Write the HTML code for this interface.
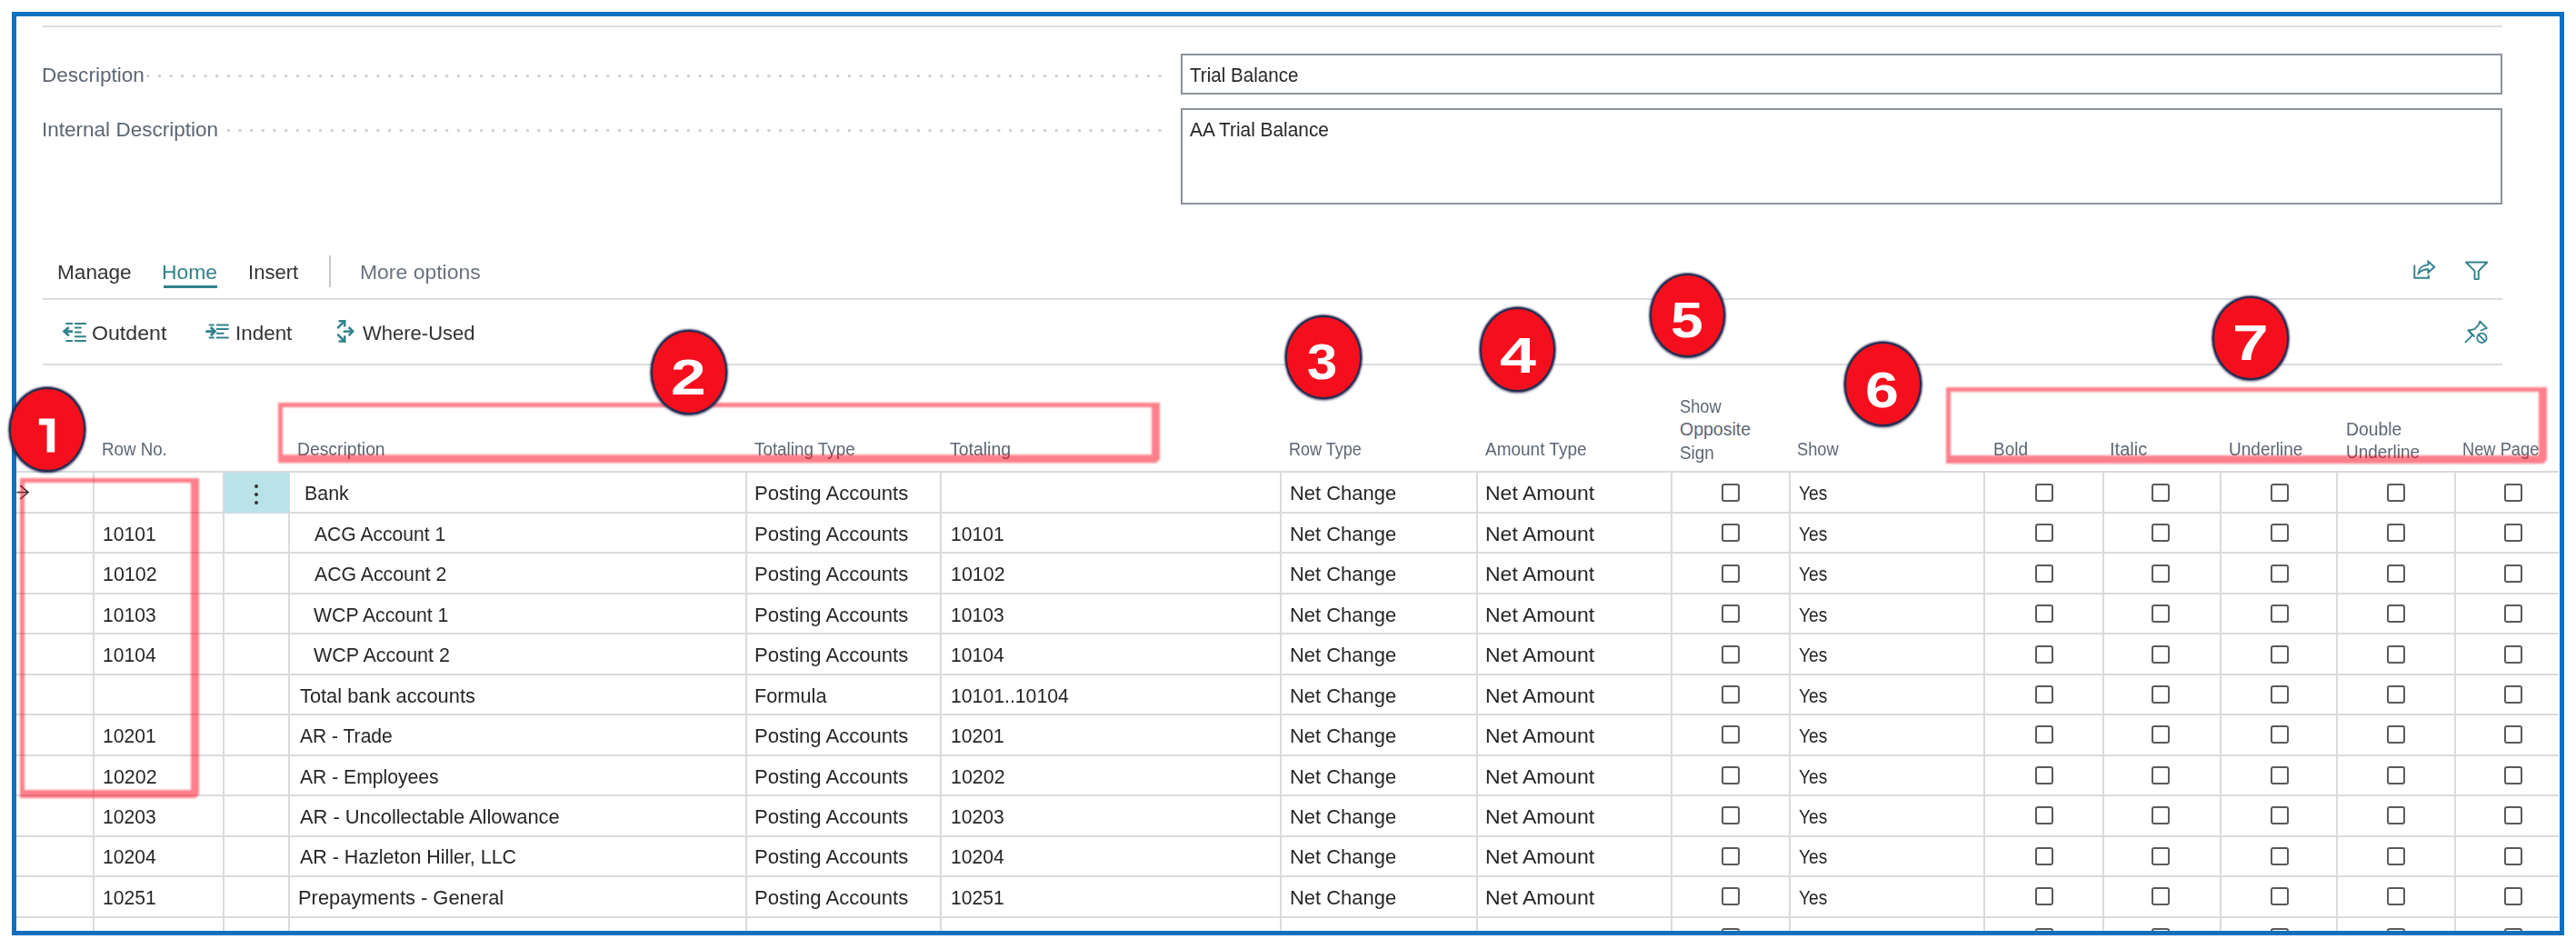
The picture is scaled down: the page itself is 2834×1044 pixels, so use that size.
<!DOCTYPE html>
<html><head><meta charset="utf-8"><style>
html,body{margin:0;padding:0;background:#fff;width:2834px;height:1044px;overflow:hidden;position:relative}
.t{position:absolute;font-family:"Liberation Sans",sans-serif;line-height:1;white-space:nowrap}
.b{position:absolute}
.cb{width:20px;height:20px;box-sizing:border-box;border:2px solid #5a5a5a;border-radius:3px;background:#fff}
.rr{box-sizing:border-box;border:5px solid rgba(255,0,16,0.5);box-shadow:4px 4px 1px rgba(255,0,16,0.5);filter:blur(0.4px)}
.bd{box-sizing:border-box;border-radius:50%;background:#f50f1d;border:2.5px solid #262b50;box-shadow:0 0 2px 1px rgba(38,43,80,0.8), 0 2px 3px rgba(20,20,50,0.25)}
.bd span{position:absolute;left:0;right:0;top:23.7px;text-align:center;font-family:"Liberation Sans",sans-serif;font-weight:bold;font-size:52px;line-height:1;color:#fff;transform:scaleX(1.25)}
</style></head><body>
<div class="b" style="left:47px;top:28px;width:2706px;height:2px;background:#dadce0"></div>
<svg class="b" style="left:0;top:0" width="1300" height="200">
<rect x="161.3" y="82.0" width="3" height="3" fill="#cdd0d5"/>
<rect x="174.0" y="82.0" width="3" height="3" fill="#cdd0d5"/>
<rect x="186.6" y="82.0" width="3" height="3" fill="#cdd0d5"/>
<rect x="199.2" y="82.0" width="3" height="3" fill="#cdd0d5"/>
<rect x="211.9" y="82.0" width="3" height="3" fill="#cdd0d5"/>
<rect x="224.6" y="82.0" width="3" height="3" fill="#cdd0d5"/>
<rect x="237.2" y="82.0" width="3" height="3" fill="#cdd0d5"/>
<rect x="249.9" y="82.0" width="3" height="3" fill="#cdd0d5"/>
<rect x="262.5" y="82.0" width="3" height="3" fill="#cdd0d5"/>
<rect x="275.2" y="82.0" width="3" height="3" fill="#cdd0d5"/>
<rect x="287.8" y="82.0" width="3" height="3" fill="#cdd0d5"/>
<rect x="300.5" y="82.0" width="3" height="3" fill="#cdd0d5"/>
<rect x="313.1" y="82.0" width="3" height="3" fill="#cdd0d5"/>
<rect x="325.8" y="82.0" width="3" height="3" fill="#cdd0d5"/>
<rect x="338.4" y="82.0" width="3" height="3" fill="#cdd0d5"/>
<rect x="351.1" y="82.0" width="3" height="3" fill="#cdd0d5"/>
<rect x="363.7" y="82.0" width="3" height="3" fill="#cdd0d5"/>
<rect x="376.4" y="82.0" width="3" height="3" fill="#cdd0d5"/>
<rect x="389.0" y="82.0" width="3" height="3" fill="#cdd0d5"/>
<rect x="401.6" y="82.0" width="3" height="3" fill="#cdd0d5"/>
<rect x="414.3" y="82.0" width="3" height="3" fill="#cdd0d5"/>
<rect x="427.0" y="82.0" width="3" height="3" fill="#cdd0d5"/>
<rect x="439.6" y="82.0" width="3" height="3" fill="#cdd0d5"/>
<rect x="452.2" y="82.0" width="3" height="3" fill="#cdd0d5"/>
<rect x="464.9" y="82.0" width="3" height="3" fill="#cdd0d5"/>
<rect x="477.6" y="82.0" width="3" height="3" fill="#cdd0d5"/>
<rect x="490.2" y="82.0" width="3" height="3" fill="#cdd0d5"/>
<rect x="502.9" y="82.0" width="3" height="3" fill="#cdd0d5"/>
<rect x="515.5" y="82.0" width="3" height="3" fill="#cdd0d5"/>
<rect x="528.2" y="82.0" width="3" height="3" fill="#cdd0d5"/>
<rect x="540.8" y="82.0" width="3" height="3" fill="#cdd0d5"/>
<rect x="553.5" y="82.0" width="3" height="3" fill="#cdd0d5"/>
<rect x="566.1" y="82.0" width="3" height="3" fill="#cdd0d5"/>
<rect x="578.8" y="82.0" width="3" height="3" fill="#cdd0d5"/>
<rect x="591.4" y="82.0" width="3" height="3" fill="#cdd0d5"/>
<rect x="604.0" y="82.0" width="3" height="3" fill="#cdd0d5"/>
<rect x="616.7" y="82.0" width="3" height="3" fill="#cdd0d5"/>
<rect x="629.4" y="82.0" width="3" height="3" fill="#cdd0d5"/>
<rect x="642.0" y="82.0" width="3" height="3" fill="#cdd0d5"/>
<rect x="654.7" y="82.0" width="3" height="3" fill="#cdd0d5"/>
<rect x="667.3" y="82.0" width="3" height="3" fill="#cdd0d5"/>
<rect x="680.0" y="82.0" width="3" height="3" fill="#cdd0d5"/>
<rect x="692.6" y="82.0" width="3" height="3" fill="#cdd0d5"/>
<rect x="705.2" y="82.0" width="3" height="3" fill="#cdd0d5"/>
<rect x="717.9" y="82.0" width="3" height="3" fill="#cdd0d5"/>
<rect x="730.5" y="82.0" width="3" height="3" fill="#cdd0d5"/>
<rect x="743.2" y="82.0" width="3" height="3" fill="#cdd0d5"/>
<rect x="755.9" y="82.0" width="3" height="3" fill="#cdd0d5"/>
<rect x="768.5" y="82.0" width="3" height="3" fill="#cdd0d5"/>
<rect x="781.2" y="82.0" width="3" height="3" fill="#cdd0d5"/>
<rect x="793.8" y="82.0" width="3" height="3" fill="#cdd0d5"/>
<rect x="806.5" y="82.0" width="3" height="3" fill="#cdd0d5"/>
<rect x="819.1" y="82.0" width="3" height="3" fill="#cdd0d5"/>
<rect x="831.8" y="82.0" width="3" height="3" fill="#cdd0d5"/>
<rect x="844.4" y="82.0" width="3" height="3" fill="#cdd0d5"/>
<rect x="857.0" y="82.0" width="3" height="3" fill="#cdd0d5"/>
<rect x="869.7" y="82.0" width="3" height="3" fill="#cdd0d5"/>
<rect x="882.4" y="82.0" width="3" height="3" fill="#cdd0d5"/>
<rect x="895.0" y="82.0" width="3" height="3" fill="#cdd0d5"/>
<rect x="907.7" y="82.0" width="3" height="3" fill="#cdd0d5"/>
<rect x="920.3" y="82.0" width="3" height="3" fill="#cdd0d5"/>
<rect x="933.0" y="82.0" width="3" height="3" fill="#cdd0d5"/>
<rect x="945.6" y="82.0" width="3" height="3" fill="#cdd0d5"/>
<rect x="958.2" y="82.0" width="3" height="3" fill="#cdd0d5"/>
<rect x="970.9" y="82.0" width="3" height="3" fill="#cdd0d5"/>
<rect x="983.5" y="82.0" width="3" height="3" fill="#cdd0d5"/>
<rect x="996.2" y="82.0" width="3" height="3" fill="#cdd0d5"/>
<rect x="1008.9" y="82.0" width="3" height="3" fill="#cdd0d5"/>
<rect x="1021.5" y="82.0" width="3" height="3" fill="#cdd0d5"/>
<rect x="1034.2" y="82.0" width="3" height="3" fill="#cdd0d5"/>
<rect x="1046.8" y="82.0" width="3" height="3" fill="#cdd0d5"/>
<rect x="1059.5" y="82.0" width="3" height="3" fill="#cdd0d5"/>
<rect x="1072.1" y="82.0" width="3" height="3" fill="#cdd0d5"/>
<rect x="1084.8" y="82.0" width="3" height="3" fill="#cdd0d5"/>
<rect x="1097.4" y="82.0" width="3" height="3" fill="#cdd0d5"/>
<rect x="1110.0" y="82.0" width="3" height="3" fill="#cdd0d5"/>
<rect x="1122.7" y="82.0" width="3" height="3" fill="#cdd0d5"/>
<rect x="1135.4" y="82.0" width="3" height="3" fill="#cdd0d5"/>
<rect x="1148.0" y="82.0" width="3" height="3" fill="#cdd0d5"/>
<rect x="1160.7" y="82.0" width="3" height="3" fill="#cdd0d5"/>
<rect x="1173.3" y="82.0" width="3" height="3" fill="#cdd0d5"/>
<rect x="1186.0" y="82.0" width="3" height="3" fill="#cdd0d5"/>
<rect x="1198.6" y="82.0" width="3" height="3" fill="#cdd0d5"/>
<rect x="1211.2" y="82.0" width="3" height="3" fill="#cdd0d5"/>
<rect x="1223.9" y="82.0" width="3" height="3" fill="#cdd0d5"/>
<rect x="1236.5" y="82.0" width="3" height="3" fill="#cdd0d5"/>
<rect x="1249.2" y="82.0" width="3" height="3" fill="#cdd0d5"/>
<rect x="1261.8" y="82.0" width="3" height="3" fill="#cdd0d5"/>
<rect x="1274.5" y="82.0" width="3" height="3" fill="#cdd0d5"/>
<rect x="237.2" y="142.0" width="3" height="3" fill="#cdd0d5"/>
<rect x="249.9" y="142.0" width="3" height="3" fill="#cdd0d5"/>
<rect x="262.5" y="142.0" width="3" height="3" fill="#cdd0d5"/>
<rect x="275.2" y="142.0" width="3" height="3" fill="#cdd0d5"/>
<rect x="287.8" y="142.0" width="3" height="3" fill="#cdd0d5"/>
<rect x="300.5" y="142.0" width="3" height="3" fill="#cdd0d5"/>
<rect x="313.1" y="142.0" width="3" height="3" fill="#cdd0d5"/>
<rect x="325.8" y="142.0" width="3" height="3" fill="#cdd0d5"/>
<rect x="338.4" y="142.0" width="3" height="3" fill="#cdd0d5"/>
<rect x="351.1" y="142.0" width="3" height="3" fill="#cdd0d5"/>
<rect x="363.7" y="142.0" width="3" height="3" fill="#cdd0d5"/>
<rect x="376.4" y="142.0" width="3" height="3" fill="#cdd0d5"/>
<rect x="389.0" y="142.0" width="3" height="3" fill="#cdd0d5"/>
<rect x="401.6" y="142.0" width="3" height="3" fill="#cdd0d5"/>
<rect x="414.3" y="142.0" width="3" height="3" fill="#cdd0d5"/>
<rect x="427.0" y="142.0" width="3" height="3" fill="#cdd0d5"/>
<rect x="439.6" y="142.0" width="3" height="3" fill="#cdd0d5"/>
<rect x="452.2" y="142.0" width="3" height="3" fill="#cdd0d5"/>
<rect x="464.9" y="142.0" width="3" height="3" fill="#cdd0d5"/>
<rect x="477.6" y="142.0" width="3" height="3" fill="#cdd0d5"/>
<rect x="490.2" y="142.0" width="3" height="3" fill="#cdd0d5"/>
<rect x="502.9" y="142.0" width="3" height="3" fill="#cdd0d5"/>
<rect x="515.5" y="142.0" width="3" height="3" fill="#cdd0d5"/>
<rect x="528.2" y="142.0" width="3" height="3" fill="#cdd0d5"/>
<rect x="540.8" y="142.0" width="3" height="3" fill="#cdd0d5"/>
<rect x="553.5" y="142.0" width="3" height="3" fill="#cdd0d5"/>
<rect x="566.1" y="142.0" width="3" height="3" fill="#cdd0d5"/>
<rect x="578.8" y="142.0" width="3" height="3" fill="#cdd0d5"/>
<rect x="591.4" y="142.0" width="3" height="3" fill="#cdd0d5"/>
<rect x="604.0" y="142.0" width="3" height="3" fill="#cdd0d5"/>
<rect x="616.7" y="142.0" width="3" height="3" fill="#cdd0d5"/>
<rect x="629.4" y="142.0" width="3" height="3" fill="#cdd0d5"/>
<rect x="642.0" y="142.0" width="3" height="3" fill="#cdd0d5"/>
<rect x="654.7" y="142.0" width="3" height="3" fill="#cdd0d5"/>
<rect x="667.3" y="142.0" width="3" height="3" fill="#cdd0d5"/>
<rect x="680.0" y="142.0" width="3" height="3" fill="#cdd0d5"/>
<rect x="692.6" y="142.0" width="3" height="3" fill="#cdd0d5"/>
<rect x="705.2" y="142.0" width="3" height="3" fill="#cdd0d5"/>
<rect x="717.9" y="142.0" width="3" height="3" fill="#cdd0d5"/>
<rect x="730.5" y="142.0" width="3" height="3" fill="#cdd0d5"/>
<rect x="743.2" y="142.0" width="3" height="3" fill="#cdd0d5"/>
<rect x="755.9" y="142.0" width="3" height="3" fill="#cdd0d5"/>
<rect x="768.5" y="142.0" width="3" height="3" fill="#cdd0d5"/>
<rect x="781.2" y="142.0" width="3" height="3" fill="#cdd0d5"/>
<rect x="793.8" y="142.0" width="3" height="3" fill="#cdd0d5"/>
<rect x="806.5" y="142.0" width="3" height="3" fill="#cdd0d5"/>
<rect x="819.1" y="142.0" width="3" height="3" fill="#cdd0d5"/>
<rect x="831.8" y="142.0" width="3" height="3" fill="#cdd0d5"/>
<rect x="844.4" y="142.0" width="3" height="3" fill="#cdd0d5"/>
<rect x="857.0" y="142.0" width="3" height="3" fill="#cdd0d5"/>
<rect x="869.7" y="142.0" width="3" height="3" fill="#cdd0d5"/>
<rect x="882.4" y="142.0" width="3" height="3" fill="#cdd0d5"/>
<rect x="895.0" y="142.0" width="3" height="3" fill="#cdd0d5"/>
<rect x="907.7" y="142.0" width="3" height="3" fill="#cdd0d5"/>
<rect x="920.3" y="142.0" width="3" height="3" fill="#cdd0d5"/>
<rect x="933.0" y="142.0" width="3" height="3" fill="#cdd0d5"/>
<rect x="945.6" y="142.0" width="3" height="3" fill="#cdd0d5"/>
<rect x="958.2" y="142.0" width="3" height="3" fill="#cdd0d5"/>
<rect x="970.9" y="142.0" width="3" height="3" fill="#cdd0d5"/>
<rect x="983.5" y="142.0" width="3" height="3" fill="#cdd0d5"/>
<rect x="996.2" y="142.0" width="3" height="3" fill="#cdd0d5"/>
<rect x="1008.9" y="142.0" width="3" height="3" fill="#cdd0d5"/>
<rect x="1021.5" y="142.0" width="3" height="3" fill="#cdd0d5"/>
<rect x="1034.2" y="142.0" width="3" height="3" fill="#cdd0d5"/>
<rect x="1046.8" y="142.0" width="3" height="3" fill="#cdd0d5"/>
<rect x="1059.5" y="142.0" width="3" height="3" fill="#cdd0d5"/>
<rect x="1072.1" y="142.0" width="3" height="3" fill="#cdd0d5"/>
<rect x="1084.8" y="142.0" width="3" height="3" fill="#cdd0d5"/>
<rect x="1097.4" y="142.0" width="3" height="3" fill="#cdd0d5"/>
<rect x="1110.0" y="142.0" width="3" height="3" fill="#cdd0d5"/>
<rect x="1122.7" y="142.0" width="3" height="3" fill="#cdd0d5"/>
<rect x="1135.4" y="142.0" width="3" height="3" fill="#cdd0d5"/>
<rect x="1148.0" y="142.0" width="3" height="3" fill="#cdd0d5"/>
<rect x="1160.7" y="142.0" width="3" height="3" fill="#cdd0d5"/>
<rect x="1173.3" y="142.0" width="3" height="3" fill="#cdd0d5"/>
<rect x="1186.0" y="142.0" width="3" height="3" fill="#cdd0d5"/>
<rect x="1198.6" y="142.0" width="3" height="3" fill="#cdd0d5"/>
<rect x="1211.2" y="142.0" width="3" height="3" fill="#cdd0d5"/>
<rect x="1223.9" y="142.0" width="3" height="3" fill="#cdd0d5"/>
<rect x="1236.5" y="142.0" width="3" height="3" fill="#cdd0d5"/>
<rect x="1249.2" y="142.0" width="3" height="3" fill="#cdd0d5"/>
<rect x="1261.8" y="142.0" width="3" height="3" fill="#cdd0d5"/>
<rect x="1274.5" y="142.0" width="3" height="3" fill="#cdd0d5"/>
</svg>
<div class="t" style="left:46.25px;top:71.88px;font-size:22px;color:#5c6574;transform:scaleX(1.0252);transform-origin:0 0;background:#fff;">Description</div>
<div class="t" style="left:46.25px;top:131.88px;font-size:22px;color:#5c6574;transform:scaleX(1.0237);transform-origin:0 0;background:#fff;">Internal Description</div>
<div class="b" style="left:1299px;top:58.5px;width:1454px;height:45.5px;box-sizing:border-box;border:2px solid #8c929a"></div>
<div class="b" style="left:1299px;top:118.5px;width:1454px;height:106px;box-sizing:border-box;border:2px solid #8c929a"></div>
<div class="t" style="left:1308.50px;top:71.95px;font-size:22.5px;color:#262626;transform:scaleX(0.9154);transform-origin:0 0;">Trial Balance</div>
<div class="t" style="left:1308.50px;top:131.95px;font-size:22.5px;color:#262626;transform:scaleX(0.9265);transform-origin:0 0;">AA Trial Balance</div>
<div class="t" style="left:63.10px;top:290.10px;font-size:21.5px;color:#333;transform:scaleX(1.0507);transform-origin:0 0;">Manage</div>
<div class="t" style="left:178.17px;top:290.10px;font-size:21.5px;color:#31828c;transform:scaleX(1.0636);transform-origin:0 0;">Home</div>
<div class="b" style="left:180px;top:314px;width:59px;height:3px;background:#31828c"></div>
<div class="t" style="left:272.55px;top:290.10px;font-size:21.5px;color:#333;transform:scaleX(1.0269);transform-origin:0 0;">Insert</div>
<div class="b" style="left:362px;top:281px;width:2px;height:35px;background:#c4c8ce"></div>
<div class="t" style="left:396.17px;top:290.10px;font-size:21.5px;color:#6a7282;transform:scaleX(1.0672);transform-origin:0 0;">More options</div>
<div class="b" style="left:47px;top:328px;width:2706px;height:2px;background:#dadce0"></div>
<svg class="b" style="left:2650px;top:282px" width="34" height="30" viewBox="0 0 34 30" fill="none" stroke="#31828c" stroke-width="1.9">
<path d="M6.3 9.5 V23.7 H22 V20.5"/>
<path d="M10.6 18.8 C11.2 13 15.5 9.6 21.4 9.4 V5.6 L28.2 11.7 L21.4 17.8 V14.3 C16.8 14.2 13.5 15.8 10.6 18.8 Z" stroke-linejoin="miter"/>
</svg>
<svg class="b" style="left:2708px;top:283px" width="34" height="30" viewBox="0 0 34 30" fill="none" stroke="#31828c" stroke-width="1.9" stroke-linejoin="round">
<path d="M5 5.5 H28.3 L18.8 15.2 V24.1 H14.5 V15.2 Z"/>
</svg>
<svg class="b" style="left:65px;top:350px" width="34" height="30" viewBox="0 0 34 30" fill="none" stroke="#31828c" stroke-width="2">
<path d="M7.4 5.9 H15 M17.1 5.9 H29.8 M17.1 10.5 H24.7 M17.1 15.4 H24.7 M17.1 20.2 H29.8 M7.4 25 H15 M17.1 25 H29.8"/>
<path d="M7 14.6 H15" stroke-width="2.8"/>
<path d="M10.8 10 L5.6 14.6 L10.8 19.2" stroke-width="2.8" stroke-linejoin="miter"/>
</svg>
<div class="t" style="left:100.52px;top:356.60px;font-size:21.5px;color:#333;transform:scaleX(1.0760);transform-origin:0 0;">Outdent</div>
<svg class="b" style="left:220px;top:350px" width="34" height="30" viewBox="0 0 34 30" fill="none" stroke="#31828c" stroke-width="2">
<path d="M9.8 7.4 H15.7 M18 7.4 H31.7 M18 12.1 H31.7 M18 16.8 H26.6 M9.8 21.6 H15.7 M18 21.6 H31.7"/>
<path d="M6.4 14.6 H15" stroke-width="2.8"/>
<path d="M11.8 10 L16.4 14.6 L11.8 19.2" stroke-width="2.8" stroke-linejoin="miter"/>
</svg>
<div class="t" style="left:258.91px;top:356.60px;font-size:21.5px;color:#333;transform:scaleX(1.0431);transform-origin:0 0;">Indent</div>
<svg class="b" style="left:365px;top:347px" width="34" height="34" viewBox="0 0 34 34" fill="none" stroke="#31828c" stroke-width="2.5">
<path d="M7.6 6.2 H14.2 V12.6"/><path d="M14.2 6.2 L7 13.4" stroke-linecap="round"/>
<path d="M7.6 28.6 H14.2 V22.2"/><path d="M14.2 28.6 L7 21.4" stroke-linecap="round"/>
<path d="M12.7 17.6 H22.5"/>
<path d="M18.6 13 L23.2 17.6 L18.6 22.2" stroke-linejoin="miter"/>
</svg>
<div class="t" style="left:398.60px;top:356.60px;font-size:21.5px;color:#333;transform:scaleX(1.0235);transform-origin:0 0;">Where-Used</div>
<svg class="b" style="left:2700px;top:345px" width="50" height="40" viewBox="0 0 50 40" fill="none" stroke="#31828c" stroke-width="1.8" stroke-linejoin="round" stroke-linecap="round">
<path d="M20.2 23.6 L15.6 18.5 L22.3 17.1 L27 12.2 L28.2 8.4 L35.8 16 L33 17 L29.5 18.5"/>
<path d="M20.2 23.6 L12.4 31.4"/>
<path d="M15.6 18.5 L22 25"/>
<circle cx="30.4" cy="26.8" r="5.2"/>
<path d="M26.8 23.2 L34 30.4"/>
</svg>
<div class="b" style="left:47px;top:400px;width:2706px;height:2px;background:#dadce0"></div>
<div class="t" style="left:112.24px;top:484.99px;font-size:19.5px;color:#5d6675;transform:scaleX(0.9597);transform-origin:0 0;">Row No.</div>
<div class="t" style="left:327.21px;top:484.99px;font-size:19.5px;color:#5d6675;transform:scaleX(0.9905);transform-origin:0 0;">Description</div>
<div class="t" style="left:829.90px;top:484.99px;font-size:19.5px;color:#5d6675;transform:scaleX(0.9658);transform-origin:0 0;">Totaling Type</div>
<div class="t" style="left:1044.80px;top:484.99px;font-size:19.5px;color:#5d6675;transform:scaleX(0.9970);transform-origin:0 0;">Totaling</div>
<div class="t" style="left:1418.28px;top:484.99px;font-size:19.5px;color:#5d6675;transform:scaleX(0.9224);transform-origin:0 0;">Row Type</div>
<div class="t" style="left:1633.90px;top:484.99px;font-size:19.5px;color:#5d6675;transform:scaleX(0.9737);transform-origin:0 0;">Amount Type</div>
<div class="t" style="left:1977.46px;top:484.99px;font-size:19.5px;color:#5d6675;transform:scaleX(0.9375);transform-origin:0 0;">Show</div>
<div class="t" style="left:2193.03px;top:484.99px;font-size:19.5px;color:#5d6675;transform:scaleX(0.9730);transform-origin:0 0;">Bold</div>
<div class="t" style="left:2320.95px;top:484.99px;font-size:19.5px;color:#5d6675;transform:scaleX(1.0270);transform-origin:0 0;">Italic</div>
<div class="t" style="left:2451.62px;top:484.99px;font-size:19.5px;color:#5d6675;transform:scaleX(0.9756);transform-origin:0 0;">Underline</div>
<div class="t" style="left:2709.46px;top:484.99px;font-size:19.5px;color:#5d6675;transform:scaleX(0.9375);transform-origin:0 0;">New Page</div>
<div class="t" style="left:1848.07px;top:437.99px;font-size:19.5px;color:#5d6675;transform:scaleX(0.9333);transform-origin:0 0;">Show</div>
<div class="t" style="left:1848.00px;top:463.49px;font-size:19.5px;color:#5d6675;">Opposite</div>
<div class="t" style="left:1848.03px;top:488.79px;font-size:19.5px;color:#5d6675;transform:scaleX(0.9676);transform-origin:0 0;">Sign</div>
<div class="t" style="left:2580.81px;top:463.29px;font-size:19.5px;color:#5d6675;transform:scaleX(0.9900);transform-origin:0 0;">Double</div>
<div class="t" style="left:2580.83px;top:488.49px;font-size:19.5px;color:#5d6675;transform:scaleX(0.9720);transform-origin:0 0;">Underline</div>
<div class="b" style="left:18px;top:518px;width:2797px;height:2px;background:#d8dadf"></div>
<div class="b" style="left:102px;top:520px;width:2px;height:504px;background:#dadbde"></div>
<div class="b" style="left:245px;top:520px;width:2px;height:504px;background:#dadbde"></div>
<div class="b" style="left:317px;top:520px;width:2px;height:504px;background:#dadbde"></div>
<div class="b" style="left:820px;top:520px;width:2px;height:504px;background:#dadbde"></div>
<div class="b" style="left:1034px;top:520px;width:2px;height:504px;background:#dadbde"></div>
<div class="b" style="left:1408px;top:520px;width:2px;height:504px;background:#dadbde"></div>
<div class="b" style="left:1624px;top:520px;width:2px;height:504px;background:#dadbde"></div>
<div class="b" style="left:1838px;top:520px;width:2px;height:504px;background:#dadbde"></div>
<div class="b" style="left:1968px;top:520px;width:2px;height:504px;background:#dadbde"></div>
<div class="b" style="left:2182px;top:520px;width:2px;height:504px;background:#dadbde"></div>
<div class="b" style="left:2313px;top:520px;width:2px;height:504px;background:#dadbde"></div>
<div class="b" style="left:2442px;top:520px;width:2px;height:504px;background:#dadbde"></div>
<div class="b" style="left:2570px;top:520px;width:2px;height:504px;background:#dadbde"></div>
<div class="b" style="left:2700px;top:520px;width:2px;height:504px;background:#dadbde"></div>
<div class="b" style="left:18px;top:563px;width:2797px;height:2px;background:#dadbde"></div>
<div class="b" style="left:18px;top:607px;width:2797px;height:2px;background:#dadbde"></div>
<div class="b" style="left:18px;top:652px;width:2797px;height:2px;background:#dadbde"></div>
<div class="b" style="left:18px;top:696px;width:2797px;height:2px;background:#dadbde"></div>
<div class="b" style="left:18px;top:741px;width:2797px;height:2px;background:#dadbde"></div>
<div class="b" style="left:18px;top:785px;width:2797px;height:2px;background:#dadbde"></div>
<div class="b" style="left:18px;top:830px;width:2797px;height:2px;background:#dadbde"></div>
<div class="b" style="left:18px;top:874px;width:2797px;height:2px;background:#dadbde"></div>
<div class="b" style="left:18px;top:919px;width:2797px;height:2px;background:#dadbde"></div>
<div class="b" style="left:18px;top:963px;width:2797px;height:2px;background:#dadbde"></div>
<div class="b" style="left:18px;top:1008px;width:2797px;height:2px;background:#dadbde"></div>
<div class="b" style="left:247px;top:520px;width:71px;height:44px;background:#b9e3e9"></div>
<div class="b" style="left:280px;top:533px;width:4px;height:4px;background:#333;border-radius:2px"></div>
<div class="b" style="left:280px;top:542px;width:4px;height:4px;background:#333;border-radius:2px"></div>
<div class="b" style="left:280px;top:551px;width:4px;height:4px;background:#333;border-radius:2px"></div>
<svg class="b" style="left:16px;top:532px" width="20" height="20" viewBox="0 0 20 20" fill="none" stroke="#333" stroke-width="1.6">
<path d="M2.5 9.6 H15"/><path d="M6.2 2.2 L15 9.6 L6.2 17"/></svg>
<div class="t" style="left:334.50px;top:532.45px;font-size:22.5px;color:#262626;transform:scaleX(0.9510);transform-origin:0 0;">Bank</div>
<div class="t" style="left:829.74px;top:532.45px;font-size:22.5px;color:#262626;transform:scaleX(0.9807);transform-origin:0 0;">Posting Accounts</div>
<div class="t" style="left:1419.25px;top:532.45px;font-size:22.5px;color:#262626;transform:scaleX(0.9752);transform-origin:0 0;">Net Change</div>
<div class="t" style="left:1633.86px;top:532.45px;font-size:22.5px;color:#262626;transform:scaleX(1.0214);transform-origin:0 0;">Net Amount</div>
<div class="t" style="left:1979.35px;top:532.45px;font-size:22.5px;color:#262626;transform:scaleX(0.8514);transform-origin:0 0;">Yes</div>
<div class="b cb" style="left:1894px;top:531.7px"></div>
<div class="b cb" style="left:2239px;top:531.7px"></div>
<div class="b cb" style="left:2367px;top:531.7px"></div>
<div class="b cb" style="left:2498px;top:531.7px"></div>
<div class="b cb" style="left:2626px;top:531.7px"></div>
<div class="b cb" style="left:2755px;top:531.7px"></div>
<div class="t" style="left:113.13px;top:576.89px;font-size:22.5px;color:#262626;transform:scaleX(0.9367);transform-origin:0 0;">10101</div>
<div class="t" style="left:345.70px;top:576.89px;font-size:22.5px;color:#262626;transform:scaleX(0.9370);transform-origin:0 0;">ACG Account 1</div>
<div class="t" style="left:829.74px;top:576.89px;font-size:22.5px;color:#262626;transform:scaleX(0.9807);transform-origin:0 0;">Posting Accounts</div>
<div class="t" style="left:1046.13px;top:576.89px;font-size:22.5px;color:#262626;transform:scaleX(0.9367);transform-origin:0 0;">10101</div>
<div class="t" style="left:1419.25px;top:576.89px;font-size:22.5px;color:#262626;transform:scaleX(0.9752);transform-origin:0 0;">Net Change</div>
<div class="t" style="left:1633.86px;top:576.89px;font-size:22.5px;color:#262626;transform:scaleX(1.0214);transform-origin:0 0;">Net Amount</div>
<div class="t" style="left:1979.35px;top:576.89px;font-size:22.5px;color:#262626;transform:scaleX(0.8514);transform-origin:0 0;">Yes</div>
<div class="b cb" style="left:1894px;top:576.1px"></div>
<div class="b cb" style="left:2239px;top:576.1px"></div>
<div class="b cb" style="left:2367px;top:576.1px"></div>
<div class="b cb" style="left:2498px;top:576.1px"></div>
<div class="b cb" style="left:2626px;top:576.1px"></div>
<div class="b cb" style="left:2755px;top:576.1px"></div>
<div class="t" style="left:113.09px;top:621.33px;font-size:22.5px;color:#262626;transform:scaleX(0.9525);transform-origin:0 0;">10102</div>
<div class="t" style="left:345.70px;top:621.33px;font-size:22.5px;color:#262626;transform:scaleX(0.9448);transform-origin:0 0;">ACG Account 2</div>
<div class="t" style="left:829.74px;top:621.33px;font-size:22.5px;color:#262626;transform:scaleX(0.9807);transform-origin:0 0;">Posting Accounts</div>
<div class="t" style="left:1046.09px;top:621.33px;font-size:22.5px;color:#262626;transform:scaleX(0.9525);transform-origin:0 0;">10102</div>
<div class="t" style="left:1419.25px;top:621.33px;font-size:22.5px;color:#262626;transform:scaleX(0.9752);transform-origin:0 0;">Net Change</div>
<div class="t" style="left:1633.86px;top:621.33px;font-size:22.5px;color:#262626;transform:scaleX(1.0214);transform-origin:0 0;">Net Amount</div>
<div class="t" style="left:1979.35px;top:621.33px;font-size:22.5px;color:#262626;transform:scaleX(0.8514);transform-origin:0 0;">Yes</div>
<div class="b cb" style="left:1894px;top:620.6px"></div>
<div class="b cb" style="left:2239px;top:620.6px"></div>
<div class="b cb" style="left:2367px;top:620.6px"></div>
<div class="b cb" style="left:2498px;top:620.6px"></div>
<div class="b cb" style="left:2626px;top:620.6px"></div>
<div class="b cb" style="left:2755px;top:620.6px"></div>
<div class="t" style="left:113.13px;top:665.77px;font-size:22.5px;color:#262626;transform:scaleX(0.9367);transform-origin:0 0;">10103</div>
<div class="t" style="left:345.30px;top:665.77px;font-size:22.5px;color:#262626;transform:scaleX(0.9443);transform-origin:0 0;">WCP Account 1</div>
<div class="t" style="left:829.74px;top:665.77px;font-size:22.5px;color:#262626;transform:scaleX(0.9807);transform-origin:0 0;">Posting Accounts</div>
<div class="t" style="left:1046.13px;top:665.77px;font-size:22.5px;color:#262626;transform:scaleX(0.9367);transform-origin:0 0;">10103</div>
<div class="t" style="left:1419.25px;top:665.77px;font-size:22.5px;color:#262626;transform:scaleX(0.9752);transform-origin:0 0;">Net Change</div>
<div class="t" style="left:1633.86px;top:665.77px;font-size:22.5px;color:#262626;transform:scaleX(1.0214);transform-origin:0 0;">Net Amount</div>
<div class="t" style="left:1979.35px;top:665.77px;font-size:22.5px;color:#262626;transform:scaleX(0.8514);transform-origin:0 0;">Yes</div>
<div class="b cb" style="left:1894px;top:665.0px"></div>
<div class="b cb" style="left:2239px;top:665.0px"></div>
<div class="b cb" style="left:2367px;top:665.0px"></div>
<div class="b cb" style="left:2498px;top:665.0px"></div>
<div class="b cb" style="left:2626px;top:665.0px"></div>
<div class="b cb" style="left:2755px;top:665.0px"></div>
<div class="t" style="left:113.13px;top:710.21px;font-size:22.5px;color:#262626;transform:scaleX(0.9367);transform-origin:0 0;">10104</div>
<div class="t" style="left:345.30px;top:710.21px;font-size:22.5px;color:#262626;transform:scaleX(0.9538);transform-origin:0 0;">WCP Account 2</div>
<div class="t" style="left:829.74px;top:710.21px;font-size:22.5px;color:#262626;transform:scaleX(0.9807);transform-origin:0 0;">Posting Accounts</div>
<div class="t" style="left:1046.13px;top:710.21px;font-size:22.5px;color:#262626;transform:scaleX(0.9367);transform-origin:0 0;">10104</div>
<div class="t" style="left:1419.25px;top:710.21px;font-size:22.5px;color:#262626;transform:scaleX(0.9752);transform-origin:0 0;">Net Change</div>
<div class="t" style="left:1633.86px;top:710.21px;font-size:22.5px;color:#262626;transform:scaleX(1.0214);transform-origin:0 0;">Net Amount</div>
<div class="t" style="left:1979.35px;top:710.21px;font-size:22.5px;color:#262626;transform:scaleX(0.8514);transform-origin:0 0;">Yes</div>
<div class="b cb" style="left:1894px;top:709.5px"></div>
<div class="b cb" style="left:2239px;top:709.5px"></div>
<div class="b cb" style="left:2367px;top:709.5px"></div>
<div class="b cb" style="left:2498px;top:709.5px"></div>
<div class="b cb" style="left:2626px;top:709.5px"></div>
<div class="b cb" style="left:2755px;top:709.5px"></div>
<div class="t" style="left:330.00px;top:754.65px;font-size:22.5px;color:#262626;transform:scaleX(0.9697);transform-origin:0 0;">Total bank accounts</div>
<div class="t" style="left:830.47px;top:754.65px;font-size:22.5px;color:#262626;transform:scaleX(0.9630);transform-origin:0 0;">Formula</div>
<div class="t" style="left:1046.11px;top:754.65px;font-size:22.5px;color:#262626;transform:scaleX(0.9430);transform-origin:0 0;">10101..10104</div>
<div class="t" style="left:1419.25px;top:754.65px;font-size:22.5px;color:#262626;transform:scaleX(0.9752);transform-origin:0 0;">Net Change</div>
<div class="t" style="left:1633.86px;top:754.65px;font-size:22.5px;color:#262626;transform:scaleX(1.0214);transform-origin:0 0;">Net Amount</div>
<div class="t" style="left:1979.35px;top:754.65px;font-size:22.5px;color:#262626;transform:scaleX(0.8514);transform-origin:0 0;">Yes</div>
<div class="b cb" style="left:1894px;top:753.9px"></div>
<div class="b cb" style="left:2239px;top:753.9px"></div>
<div class="b cb" style="left:2367px;top:753.9px"></div>
<div class="b cb" style="left:2498px;top:753.9px"></div>
<div class="b cb" style="left:2626px;top:753.9px"></div>
<div class="b cb" style="left:2755px;top:753.9px"></div>
<div class="t" style="left:113.13px;top:799.09px;font-size:22.5px;color:#262626;transform:scaleX(0.9367);transform-origin:0 0;">10201</div>
<div class="t" style="left:330.00px;top:799.09px;font-size:22.5px;color:#262626;transform:scaleX(0.9352);transform-origin:0 0;">AR - Trade</div>
<div class="t" style="left:829.74px;top:799.09px;font-size:22.5px;color:#262626;transform:scaleX(0.9807);transform-origin:0 0;">Posting Accounts</div>
<div class="t" style="left:1046.13px;top:799.09px;font-size:22.5px;color:#262626;transform:scaleX(0.9367);transform-origin:0 0;">10201</div>
<div class="t" style="left:1419.25px;top:799.09px;font-size:22.5px;color:#262626;transform:scaleX(0.9752);transform-origin:0 0;">Net Change</div>
<div class="t" style="left:1633.86px;top:799.09px;font-size:22.5px;color:#262626;transform:scaleX(1.0214);transform-origin:0 0;">Net Amount</div>
<div class="t" style="left:1979.35px;top:799.09px;font-size:22.5px;color:#262626;transform:scaleX(0.8514);transform-origin:0 0;">Yes</div>
<div class="b cb" style="left:1894px;top:798.3px"></div>
<div class="b cb" style="left:2239px;top:798.3px"></div>
<div class="b cb" style="left:2367px;top:798.3px"></div>
<div class="b cb" style="left:2498px;top:798.3px"></div>
<div class="b cb" style="left:2626px;top:798.3px"></div>
<div class="b cb" style="left:2755px;top:798.3px"></div>
<div class="t" style="left:113.09px;top:843.53px;font-size:22.5px;color:#262626;transform:scaleX(0.9525);transform-origin:0 0;">10202</div>
<div class="t" style="left:330.00px;top:843.53px;font-size:22.5px;color:#262626;transform:scaleX(0.9383);transform-origin:0 0;">AR - Employees</div>
<div class="t" style="left:829.74px;top:843.53px;font-size:22.5px;color:#262626;transform:scaleX(0.9807);transform-origin:0 0;">Posting Accounts</div>
<div class="t" style="left:1046.09px;top:843.53px;font-size:22.5px;color:#262626;transform:scaleX(0.9525);transform-origin:0 0;">10202</div>
<div class="t" style="left:1419.25px;top:843.53px;font-size:22.5px;color:#262626;transform:scaleX(0.9752);transform-origin:0 0;">Net Change</div>
<div class="t" style="left:1633.86px;top:843.53px;font-size:22.5px;color:#262626;transform:scaleX(1.0214);transform-origin:0 0;">Net Amount</div>
<div class="t" style="left:1979.35px;top:843.53px;font-size:22.5px;color:#262626;transform:scaleX(0.8514);transform-origin:0 0;">Yes</div>
<div class="b cb" style="left:1894px;top:842.8px"></div>
<div class="b cb" style="left:2239px;top:842.8px"></div>
<div class="b cb" style="left:2367px;top:842.8px"></div>
<div class="b cb" style="left:2498px;top:842.8px"></div>
<div class="b cb" style="left:2626px;top:842.8px"></div>
<div class="b cb" style="left:2755px;top:842.8px"></div>
<div class="t" style="left:113.13px;top:887.97px;font-size:22.5px;color:#262626;transform:scaleX(0.9367);transform-origin:0 0;">10203</div>
<div class="t" style="left:330.00px;top:887.97px;font-size:22.5px;color:#262626;transform:scaleX(0.9721);transform-origin:0 0;">AR - Uncollectable Allowance</div>
<div class="t" style="left:829.74px;top:887.97px;font-size:22.5px;color:#262626;transform:scaleX(0.9807);transform-origin:0 0;">Posting Accounts</div>
<div class="t" style="left:1046.13px;top:887.97px;font-size:22.5px;color:#262626;transform:scaleX(0.9367);transform-origin:0 0;">10203</div>
<div class="t" style="left:1419.25px;top:887.97px;font-size:22.5px;color:#262626;transform:scaleX(0.9752);transform-origin:0 0;">Net Change</div>
<div class="t" style="left:1633.86px;top:887.97px;font-size:22.5px;color:#262626;transform:scaleX(1.0214);transform-origin:0 0;">Net Amount</div>
<div class="t" style="left:1979.35px;top:887.97px;font-size:22.5px;color:#262626;transform:scaleX(0.8514);transform-origin:0 0;">Yes</div>
<div class="b cb" style="left:1894px;top:887.2px"></div>
<div class="b cb" style="left:2239px;top:887.2px"></div>
<div class="b cb" style="left:2367px;top:887.2px"></div>
<div class="b cb" style="left:2498px;top:887.2px"></div>
<div class="b cb" style="left:2626px;top:887.2px"></div>
<div class="b cb" style="left:2755px;top:887.2px"></div>
<div class="t" style="left:113.13px;top:932.41px;font-size:22.5px;color:#262626;transform:scaleX(0.9367);transform-origin:0 0;">10204</div>
<div class="t" style="left:330.00px;top:932.41px;font-size:22.5px;color:#262626;transform:scaleX(0.9518);transform-origin:0 0;">AR - Hazleton Hiller, LLC</div>
<div class="t" style="left:829.74px;top:932.41px;font-size:22.5px;color:#262626;transform:scaleX(0.9807);transform-origin:0 0;">Posting Accounts</div>
<div class="t" style="left:1046.13px;top:932.41px;font-size:22.5px;color:#262626;transform:scaleX(0.9367);transform-origin:0 0;">10204</div>
<div class="t" style="left:1419.25px;top:932.41px;font-size:22.5px;color:#262626;transform:scaleX(0.9752);transform-origin:0 0;">Net Change</div>
<div class="t" style="left:1633.86px;top:932.41px;font-size:22.5px;color:#262626;transform:scaleX(1.0214);transform-origin:0 0;">Net Amount</div>
<div class="t" style="left:1979.35px;top:932.41px;font-size:22.5px;color:#262626;transform:scaleX(0.8514);transform-origin:0 0;">Yes</div>
<div class="b cb" style="left:1894px;top:931.7px"></div>
<div class="b cb" style="left:2239px;top:931.7px"></div>
<div class="b cb" style="left:2367px;top:931.7px"></div>
<div class="b cb" style="left:2498px;top:931.7px"></div>
<div class="b cb" style="left:2626px;top:931.7px"></div>
<div class="b cb" style="left:2755px;top:931.7px"></div>
<div class="t" style="left:113.13px;top:976.85px;font-size:22.5px;color:#262626;transform:scaleX(0.9367);transform-origin:0 0;">10251</div>
<div class="t" style="left:328.06px;top:976.85px;font-size:22.5px;color:#262626;transform:scaleX(0.9725);transform-origin:0 0;">Prepayments - General</div>
<div class="t" style="left:829.74px;top:976.85px;font-size:22.5px;color:#262626;transform:scaleX(0.9807);transform-origin:0 0;">Posting Accounts</div>
<div class="t" style="left:1046.13px;top:976.85px;font-size:22.5px;color:#262626;transform:scaleX(0.9367);transform-origin:0 0;">10251</div>
<div class="t" style="left:1419.25px;top:976.85px;font-size:22.5px;color:#262626;transform:scaleX(0.9752);transform-origin:0 0;">Net Change</div>
<div class="t" style="left:1633.86px;top:976.85px;font-size:22.5px;color:#262626;transform:scaleX(1.0214);transform-origin:0 0;">Net Amount</div>
<div class="t" style="left:1979.35px;top:976.85px;font-size:22.5px;color:#262626;transform:scaleX(0.8514);transform-origin:0 0;">Yes</div>
<div class="b cb" style="left:1894px;top:976.1px"></div>
<div class="b cb" style="left:2239px;top:976.1px"></div>
<div class="b cb" style="left:2367px;top:976.1px"></div>
<div class="b cb" style="left:2498px;top:976.1px"></div>
<div class="b cb" style="left:2626px;top:976.1px"></div>
<div class="b cb" style="left:2755px;top:976.1px"></div>
<div class="b cb" style="left:1894px;top:1020.5px"></div>
<div class="b cb" style="left:2239px;top:1020.5px"></div>
<div class="b cb" style="left:2367px;top:1020.5px"></div>
<div class="b cb" style="left:2498px;top:1020.5px"></div>
<div class="b cb" style="left:2626px;top:1020.5px"></div>
<div class="b cb" style="left:2755px;top:1020.5px"></div>
<svg class="b" width="0" height="0"><defs><filter id="bl" x="-5%" y="-5%" width="110%" height="110%"><feGaussianBlur stdDeviation="1.0"/></filter></defs></svg>
<svg class="b" style="left:19px;top:523px" width="203" height="358"><path d="M3,3 H200 V351 L196,355 H3 Z M8,8 V346 H191 V8 Z" fill="rgba(255,0,16,0.5)" fill-rule="evenodd" filter="url(#bl)"/></svg>
<svg class="b" style="left:303px;top:440.3px" width="976" height="72.30000000000001"><path d="M3,3 H973 V65.30000000000001 L969,69.30000000000001 H3 Z M8,8 V60.30000000000001 H964 V8 Z" fill="rgba(255,0,16,0.5)" fill-rule="evenodd" filter="url(#bl)"/></svg>
<svg class="b" style="left:2138px;top:423px" width="667" height="90"><path d="M3,3 H664 V83 L660,87 H3 Z M8,8 V78 H655 V8 Z" fill="rgba(255,0,16,0.5)" fill-rule="evenodd" filter="url(#bl)"/></svg>
<div class="b" style="left:0;top:1029px;width:2834px;height:15px;background:#fff"></div>
<div class="b" style="left:2821px;top:0;width:13px;height:1044px;background:#fff"></div>
<div class="b" style="left:13px;top:13px;width:2808px;height:1016px;box-sizing:border-box;border:5px solid #1070be"></div>
<div class="b bd" style="left:10px;top:426px;width:84.4px;height:93px"></div>
<svg class="b" style="left:0;top:0" width="100" height="520"><path d="M42.8 460.4 H60.2 V497.6 H51.6 V467.4 H42.8 Z" fill="#fff"/></svg>
<div class="b bd" style="left:716.4px;top:362.6px;width:83.60000000000002px;height:93.39999999999998px"></div>
<div class="t" style="left:737.98px;top:387.94px;font-size:55px;color:#fff;font-weight:bold;transform:scaleX(1.2615);transform-origin:0 0;">2</div>
<div class="b bd" style="left:1413.9px;top:347px;width:84.09999999999991px;height:91.69999999999999px"></div>
<div class="t" style="left:1437.51px;top:371.14px;font-size:55px;color:#fff;font-weight:bold;transform:scaleX(1.0857);transform-origin:0 0;">3</div>
<div class="b bd" style="left:1627.6px;top:338.2px;width:83.40000000000009px;height:93.0px"></div>
<div class="t" style="left:1650.29px;top:363.64px;font-size:55px;color:#fff;font-weight:bold;transform:scaleX(1.3069);transform-origin:0 0;">4</div>
<div class="b bd" style="left:1815.3px;top:301.1px;width:83.20000000000005px;height:92.39999999999998px"></div>
<div class="t" style="left:1838.06px;top:325.24px;font-size:55px;color:#fff;font-weight:bold;transform:scaleX(1.1704);transform-origin:0 0;">5</div>
<div class="b bd" style="left:2028.9px;top:376.4px;width:85.09999999999991px;height:93.10000000000002px"></div>
<div class="t" style="left:2052.29px;top:401.64px;font-size:55px;color:#fff;font-weight:bold;transform:scaleX(1.2074);transform-origin:0 0;">6</div>
<div class="b bd" style="left:2433.9px;top:326px;width:84.09999999999991px;height:92px"></div>
<div class="t" style="left:2456.01px;top:350.14px;font-size:55px;color:#fff;font-weight:bold;transform:scaleX(1.2962);transform-origin:0 0;">7</div>
</body></html>
